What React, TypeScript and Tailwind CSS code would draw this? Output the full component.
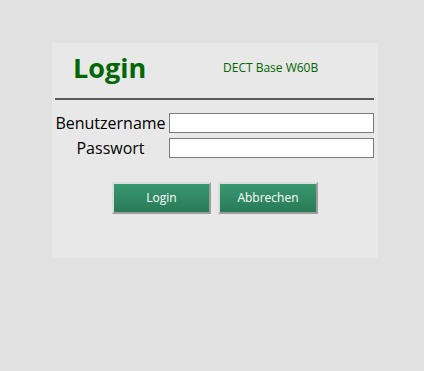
export default function App() {
  return (
    <div className="min-h-[371px] w-full bg-[#e1e1e1] pt-[43px] font-['Open_Sans',sans-serif]">
      <div className="ml-[52px] h-[215px] w-[326px] bg-[#e8e8e8]">
        {/* Header */}
        <div className="flex h-[55px] items-center pb-[6px]">
          <h1 className="ml-[21px] w-[128px] text-[27px] font-bold leading-none text-[#006600]">
            Login
          </h1>
          <span className="ml-[22px] text-[12px] leading-none text-[#006600]">DECT Base W60B</span>
        </div>
        <div className="ml-[3px] mr-[4px] h-[2px] bg-[#5a5a5a]" />

        {/* Form */}
        <div className="mt-[13px] flex flex-col gap-[5px] pr-[4px]">
          <div className="flex items-center">
            <label className="w-[117px] text-center text-[16px] leading-none text-black">
              Benutzername
            </label>
            <input
              type="text"
              className="h-[20px] flex-1 border border-[#7a7a7a] bg-white outline-none"
            />
          </div>
          <div className="flex items-center">
            <label className="w-[117px] text-center text-[16px] leading-none text-black">
              Passwort
            </label>
            <input
              type="password"
              className="h-[20px] flex-1 border border-[#7a7a7a] bg-white outline-none"
            />
          </div>
        </div>

        {/* Buttons */}
        <div className="mt-[24px] flex gap-[7px] pl-[60px]">
          <button className="h-[32px] w-[99px] border-2 border-t-[#dcdcdc] border-l-[#dcdcdc] border-r-[#9c9c9c] border-b-[#9c9c9c] bg-gradient-to-b from-[#37996f] to-[#2a7a57] text-[12px] text-white">
            Login
          </button>
          <button className="h-[32px] w-[100px] border-2 border-t-[#dcdcdc] border-l-[#dcdcdc] border-r-[#9c9c9c] border-b-[#9c9c9c] bg-gradient-to-b from-[#37996f] to-[#2a7a57] text-[12px] text-white">
            Abbrechen
          </button>
        </div>
      </div>
    </div>
  )
}
